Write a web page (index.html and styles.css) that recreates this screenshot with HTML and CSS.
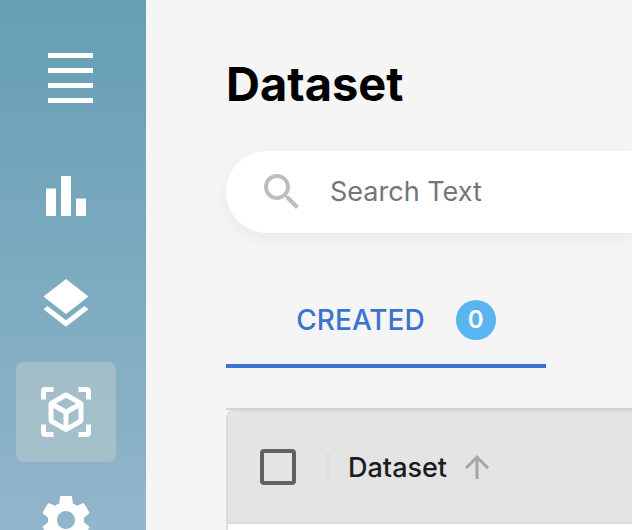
FILE: index.html
```html
<!DOCTYPE html>
<html lang="en">
<head>
<meta charset="utf-8">
<meta name="viewport" content="width=device-width, initial-scale=1">
<title>Dataset</title>
<link rel="stylesheet" href="styles.css">
</head>
<body>
<div class="app">
  <nav class="sidebar" aria-label="Main">
    <button class="menu" type="button" aria-label="Menu"><span></span><span></span><span></span><span></span></button>
    <a class="nav-item" href="#stats" aria-label="Statistics">
      <svg viewBox="0 0 24 24"><path d="M4 9h4v11H4zm12 4h4v7h-4zm-6-9h4v16h-4z"/></svg>
    </a>
    <a class="nav-item" href="#layers" aria-label="Layers">
      <svg viewBox="0 0 24 24"><path d="M11.99 18.54l-7.37-5.73L3 14.07l9 7 9-7-1.63-1.27-7.38 5.74zM12 16l7.36-5.73L21 9l-9-7-9 7 1.63 1.27L12 16z"/></svg>
    </a>
    <a class="nav-item selected" href="#dataset" aria-label="Dataset" aria-current="page">
      <svg viewBox="0 0 24 24"><path d="M17,22V20H20V17H22V20.5C22,20.89 21.84,21.24 21.54,21.54C21.24,21.84 20.89,22 20.5,22H17M7,22H3.5C3.11,22 2.76,21.84 2.46,21.54C2.16,21.24 2,20.89 2,20.5V17H4V20H7V22M17,2H20.5C20.89,2 21.24,2.16 21.54,2.46C21.84,2.76 22,3.11 22,3.5V7H20V4H17V2M7,2V4H4V7H2V3.5C2,3.11 2.16,2.76 2.46,2.46C2.76,2.16 3.11,2 3.5,2H7M13,17.25L17,14.95V10.36L13,12.66V17.25M12,10.92L16,8.63L12,6.28L8,8.63L12,10.92M7,14.95L11,17.25V12.66L7,10.36V14.95M18.23,7.59C18.73,7.91 19,8.34 19,8.91V15.23C19,15.8 18.73,16.23 18.23,16.55L12.75,19.73C12.25,20.05 11.75,20.05 11.25,19.73L5.77,16.55C5.27,16.23 5,15.8 5,15.23V8.91C5,8.34 5.27,7.91 5.77,7.59L11.25,4.41C11.5,4.28 11.75,4.22 12,4.22C12.25,4.22 12.5,4.28 12.75,4.41L18.23,7.59Z"/></svg>
    </a>
    <a class="nav-item" href="#settings" aria-label="Settings">
      <svg viewBox="0 0 24 24"><path d="M19.14 12.94c.04-.3.06-.61.06-.94 0-.32-.02-.64-.07-.94l2.03-1.58c.18-.14.23-.41.12-.61l-1.92-3.32c-.12-.22-.37-.29-.59-.22l-2.39.96c-.5-.38-1.03-.7-1.62-.94l-.36-2.54c-.04-.24-.24-.41-.48-.41h-3.84c-.24 0-.43.17-.47.41l-.36 2.54c-.59.24-1.13.57-1.62.94l-2.39-.96c-.22-.08-.47 0-.59.22L2.74 8.87c-.12.21-.08.47.12.61l2.03 1.58c-.05.3-.09.63-.09.94s.02.64.07.94l-2.03 1.58c-.18.14-.23.41-.12.61l1.92 3.32c.12.22.37.29.59.22l2.39-.96c.5.38 1.03.7 1.62.94l.36 2.54c.05.24.24.41.48.41h3.84c.24 0 .44-.17.47-.41l.36-2.54c.59-.24 1.13-.56 1.62-.94l2.39.96c.22.08.47 0 .59-.22l1.92-3.32c.12-.22.07-.47-.12-.61l-2.01-1.58zM12 15.6c-1.98 0-3.6-1.62-3.6-3.6s1.62-3.6 3.6-3.6 3.6 1.62 3.6 3.6-1.62 3.6-3.6 3.6z"/></svg>
    </a>
  </nav>
  <main class="content">
    <h1>Dataset</h1>
    <label class="search">
      <svg viewBox="0 0 24 24" aria-hidden="true"><path d="M15.5 14h-.79l-.28-.27C15.41 12.59 16 11.11 16 9.5 16 5.91 13.09 3 9.5 3S3 5.91 3 9.5 5.91 16 9.5 16c1.61 0 3.09-.59 4.23-1.57l.27.28v.79l5 4.99L20.49 19l-4.99-5zm-6 0C7.01 14 5 11.99 5 9.5S7.01 5 9.5 5 14 7.01 14 9.5 11.99 14 9.5 14z"/></svg>
      <input type="search" placeholder="Search Text" aria-label="Search Text">
    </label>
    <div class="tabs" role="tablist">
      <button class="tab" type="button" role="tab" aria-selected="true">CREATED <span class="count">0</span></button>
    </div>
    <div class="grid-wrap">
      <table class="grid">
        <thead>
          <tr>
            <th class="pick"><input type="checkbox" aria-label="Select all rows"></th>
            <th class="name" aria-sort="ascending">
              <button class="sort" type="button">Dataset
                <svg viewBox="0 0 24 24" aria-hidden="true"><path d="M4 12l1.41 1.41L11 7.83V20h2V7.83l5.58 5.59L20 12l-8-8-8 8z"/></svg>
              </button>
            </th>
          </tr>
        </thead>
        <tbody><tr><td colspan="2"></td></tr></tbody>
      </table>
    </div>
  </main>
</div>
</body>
</html>
```
FILE: styles.css
```css
* { box-sizing: border-box; }

body {
  margin: 0;
  background: #f5f5f5;
  font-family: Inter, Roboto, sans-serif;
}

button {
  border: 0;
  padding: 0;
  background: none;
  font: inherit;
  color: inherit;
  cursor: pointer;
}

.app {
  display: flex;
  height: 100vh;
  overflow: hidden;
}

.sidebar {
  flex: 0 0 146px;
  display: flex;
  flex-direction: column;
  gap: 8px;
  padding: 53px 16px 0;
  overflow: hidden;
  background: linear-gradient(#659eb3, #92b6cb);
}

.menu {
  flex: none;
  display: flex;
  flex-direction: column;
  gap: 10px;
  width: 45px;
  margin: 0 0 35px 32px;
}

.menu span {
  width: 100%;
  height: 5px;
  background: #fff;
}

.nav-item {
  flex: none;
  display: grid;
  place-items: center;
  width: 100px;
  height: 100px;
  border-radius: 8px;
}

.nav-item svg {
  width: 60px;
  height: 60px;
  fill: #fff;
}

.selected { background: rgba(190, 205, 205, 0.5); }

.content {
  flex: 1;
  min-width: 0;
  display: flex;
  flex-direction: column;
  padding: 56px 0 0 80px;
}

h1 {
  margin: 0 0 39px;
  font-size: 47px;
  line-height: 56px;
  font-weight: 700;
  color: #000;
}

.search {
  flex: none;
  display: flex;
  align-items: center;
  gap: 24px;
  height: 82px;
  padding-left: 32px;
  border-radius: 41px 0 0 41px;
  background: #fff;
  box-shadow: 0 6px 20px rgba(0, 0, 0, 0.05);
}

.search svg {
  flex: none;
  width: 48px;
  height: 48px;
  fill: #bdbdbd;
}

.search input {
  flex: 1;
  min-width: 0;
  border: 0;
  padding: 0;
  outline: 0;
  background: none;
  font: 400 27px/40px Inter, Roboto, sans-serif;
}

.search input::placeholder { color: #757575; }

.tabs {
  flex: none;
  display: flex;
  margin: 39px 0 40px;
}

.tab {
  display: flex;
  align-items: center;
  justify-content: center;
  gap: 31px;
  width: 320px;
  height: 96px;
  padding: 4px 0 0 20px;
  border-bottom: 4px solid #3a74ce;
  color: #3a74ce;
  font-size: 28px;
  font-weight: 500;
}

.count {
  width: 40px;
  border-radius: 50%;
  background: #5ab4f1;
  color: #fff;
  font-size: 24px;
  line-height: 40px;
  font-weight: 600;
}

.grid-wrap {
  flex: 1;
  min-height: 0;
  overflow: hidden;
  border-top: 2px solid #d3d3d3;
}

.grid {
  width: 100%;
  border: 2px solid #dcdcdc;
  border-right: 0;
  border-radius: 8px 0 0 0;
  border-spacing: 0;
  background: #fff;
  overflow: hidden;
}

th {
  height: 112px;
  padding: 0;
  background: #e4e4e4;
  border-bottom: 2px solid #dcdcdc;
  text-align: left;
}

th:first-child { border-top-left-radius: 6px; }

td { height: 112px; }

.pick {
  width: 102px;
  padding-left: 32px;
  background: linear-gradient(#dedede, #dedede) right center / 4px 28px no-repeat #e4e4e4;
}

.pick input {
  display: block;
  appearance: none;
  width: 36px;
  height: 36px;
  margin: 0;
  border: 4px solid #616161;
  border-radius: 4px;
}

.name { padding-left: 18px; }

.sort {
  display: flex;
  align-items: center;
  gap: 12px;
  font-size: 27px;
  font-weight: 500;
  color: #1c1c1c;
}

.sort svg {
  width: 36px;
  height: 36px;
  fill: #a6a6a6;
}
```
